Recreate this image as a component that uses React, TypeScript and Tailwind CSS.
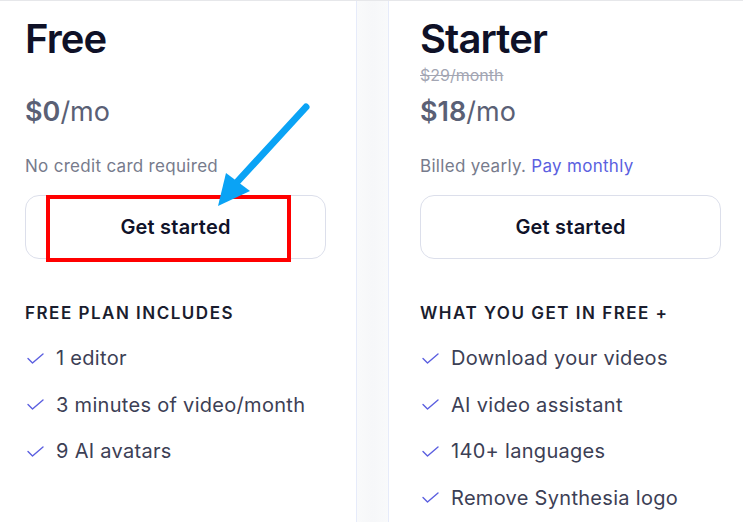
import React from 'react';

const font = { fontFamily: 'Inter, "Noto Sans", sans-serif' };

interface PlanProps {
  name: string;
  oldPrice?: string;
  price: string;
  note: React.ReactNode;
  heading: string;
  features: string[];
}

function Check() {
  return (
    <svg width="17" height="11" viewBox="0 0 17 11" fill="none" className="shrink-0 ml-[2px]">
      <path d="M1 5.5 L5.5 10 L16 1" stroke="#5b5fe0" strokeWidth="1.4" strokeLinecap="round" strokeLinejoin="round" />
    </svg>
  );
}

function Plan({ name, oldPrice, price, note, heading, features }: PlanProps) {
  return (
    <div className="flex flex-col">
      <h2 className="text-[40px] leading-[48px] font-semibold text-[#0f1127] mt-[14px] tracking-[-0.9px]">{name}</h2>
      <div className={`h-[24px] text-[16px] leading-[24px] text-[#a3a6b3] line-through ${oldPrice ? '' : 'invisible'}`}>
        {oldPrice ?? '-'}
      </div>
      <div className="text-[27px] leading-[34px] text-[#5a6075] mt-[8px]">
        <span className="font-semibold">{price}</span>/mo
      </div>
      <p className="text-[17px] leading-[24px] text-[#777b8c] mt-[25px] tracking-[0.3px]">{note}</p>
      <button className="mt-[17px] h-[64px] w-[301px] rounded-[14px] border border-[#dcdfeb] bg-white text-[20px] font-semibold text-[#10132a] tracking-[0.2px]">
        Get started
      </button>
      <h3 className="mt-[42px] text-[17px] leading-[24px] font-semibold tracking-[1.5px] text-[#1a1d2e]">{heading}</h3>
      <ul className="mt-[21px] flex flex-col gap-[22.5px]">
        {features.map((f) => (
          <li key={f} className="flex items-center gap-[12px] text-[20px] leading-[24px] text-[#3c4055] tracking-[0.3px]">
            <Check />
            <span>{f}</span>
          </li>
        ))}
      </ul>
    </div>
  );
}

export default function App() {
  return (
    <div style={font} className="relative w-[743px] h-[522px] overflow-hidden bg-white border-t border-[#e6e7ea] flex">
      <div className="w-[356px] shrink-0 pl-[25px]">
        <Plan
          name="Free"
          price="$0"
          note="No credit card required"
          heading="FREE PLAN INCLUDES"
          features={['1 editor', '3 minutes of video/month', '9 AI avatars']}
        />
      </div>
      <div className="w-[33px] shrink-0 border-x border-[#e6ebfa] bg-gradient-to-r from-[#f9fafb] via-[#f6f7f9] to-[#f9fafb]" />
      <div className="flex-1 pl-[31px]">
        <Plan
          name="Starter"
          oldPrice="$29/month"
          price="$18"
          note={
            <>
              Billed yearly. <span className="text-[#5b5fe0]">Pay monthly</span>
            </>
          }
          heading="WHAT YOU GET IN FREE +"
          features={['Download your videos', 'AI video assistant', '140+ languages', 'Remove Synthesia logo']}
        />
      </div>

      {/* annotation overlay */}
      <div className="absolute left-[46px] top-[194px] w-[245px] h-[67px] border-4 border-[#ff0000]" />
      <svg className="absolute left-0 top-0" width="743" height="522" viewBox="0 0 743 522">
        <line x1="306" y1="106" x2="238" y2="180" stroke="#0aa3f5" strokeWidth="7" strokeLinecap="round" />
        <polygon points="226,172 250,190 218,205" fill="#0aa3f5" />
      </svg>
    </div>
  );
}
